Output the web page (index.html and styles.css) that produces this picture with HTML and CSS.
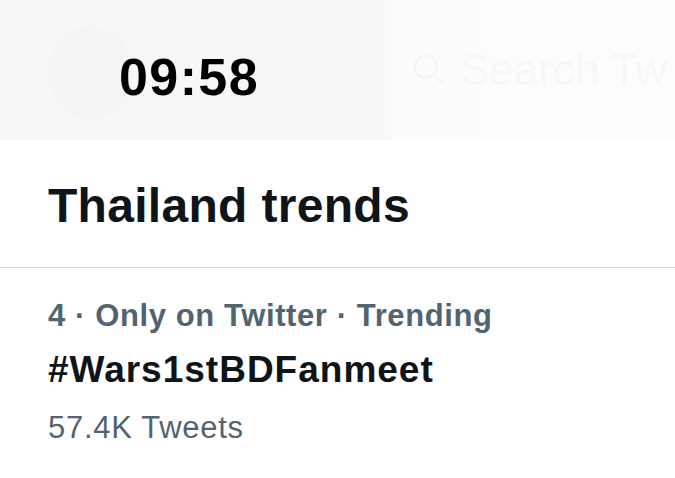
FILE: index.html
```html
<!DOCTYPE html>
<html>
<head>
<meta charset="utf-8">
<link rel="stylesheet" href="styles.css">
</head>
<body>
<header class="top">
  <div class="ghost-bar">
    <div class="ghost-avatar"></div>
    <div class="ghost-search">
      <svg class="ghost-icon" viewBox="0 0 24 24" width="38" height="38"><circle cx="10" cy="10" r="7" fill="none" stroke="#f5f5f7" stroke-width="1.6"/><line x1="15" y1="15" x2="21" y2="21" stroke="#f5f5f7" stroke-width="1.6"/></svg>
      <span>Search Tw</span>
    </div>
  </div>
  <div class="clock">09:58</div>
</header>
<main>
  <h1 class="title">Thailand trends</h1>
  <div class="divider"></div>
  <section class="trend">
    <div class="meta">4 · Only on Twitter · Trending</div>
    <div class="tag">#Wars1stBDFanmeet</div>
    <div class="count">57.4K Tweets</div>
  </section>
</main>
</body>
</html>
```

FILE: styles.css
```css
* { box-sizing: border-box; }
html, body { margin: 0; padding: 0; background: #ffffff; }
body {
  width: 675px;
  height: 478px;
  overflow: hidden;
  font-family: "Liberation Sans", Arial, sans-serif;
  color: #0f1419;
}
.top {
  position: relative;
  height: 140px;
  background: linear-gradient(90deg, #f7f7f9 0%, #f8f8fa 57%, #fcfcfd 60%, #fdfdfe 100%);
}
.ghost-bar {
  display: flex;
  align-items: center;
  height: 140px;
  padding: 0 0 0 48px;
  overflow: hidden;
}
.ghost-avatar {
  flex-shrink: 0;
  width: 86px;
  height: 94px;
  border-radius: 50%;
  background: #f5f5f6;
  margin-top: 6px;
}
.ghost-search {
  flex-shrink: 0;
  display: flex;
  align-items: center;
  gap: 12px;
  margin-left: 276px;
  color: #f7f7f8;
  font-size: 44px;
  white-space: nowrap;
}
.clock {
  position: absolute;
  left: 119px;
  top: 49px;
  font-size: 52px;
  font-weight: 700;
  letter-spacing: 1.4px;
  line-height: 56px;
  color: #000000;
}
main { display: flex; flex-direction: column; }
.title {
  margin: 0;
  padding: 38px 48px 0;
  font-size: 48px;
  font-weight: 700;
  line-height: 55px;
  letter-spacing: 0.3px;
  color: #0f1419;
}
.divider {
  margin-top: 34px;
  height: 1px;
  background: #cfd1d3;
}
.trend {
  display: flex;
  flex-direction: column;
  padding: 28px 48px 0;
}
.meta {
  font-size: 31px;
  font-weight: 700;
  line-height: 40px;
  letter-spacing: 0.6px;
  color: #536471;
}
.tag {
  margin-top: 14px;
  font-size: 37px;
  font-weight: 700;
  line-height: 40px;
  letter-spacing: 1px;
  color: #0f1419;
}
.count {
  margin-top: 20px;
  font-size: 31px;
  line-height: 36px;
  letter-spacing: 0.7px;
  color: #536471;
}
```
